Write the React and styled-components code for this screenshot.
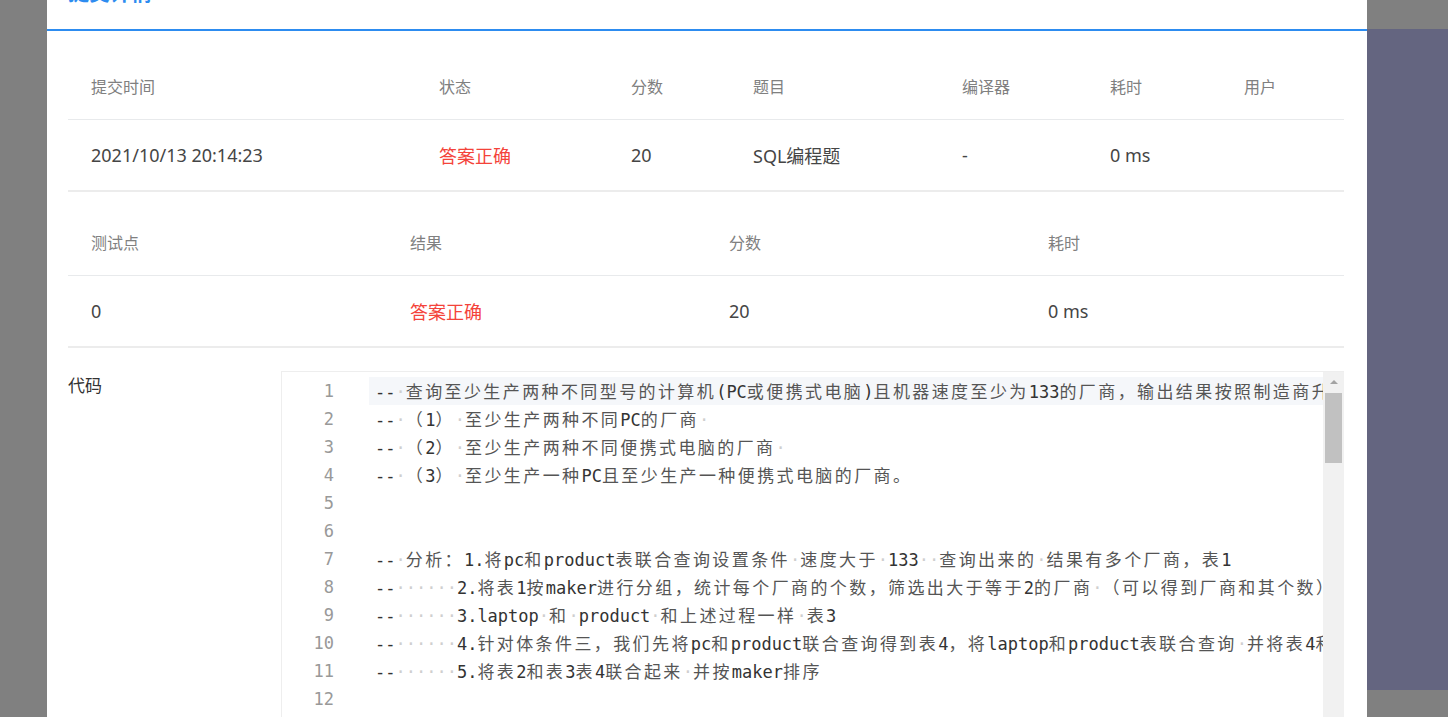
import React from 'react';
import styled, { createGlobalStyle } from 'styled-components';

const GlobalStyle = createGlobalStyle`
  html, body {
    margin: 0;
    padding: 0;
    background: #808080;
    overflow: hidden;
  }
  body {
    font-family: "Noto Sans", "Noto Sans CJK SC", sans-serif;
  }
  * { box-sizing: border-box; }
`;

const submitTable = {
  columns: '348px 192px 122px 209px 148px 134px 1fr',
  head: ['提交时间', '状态', '分数', '题目', '编译器', '耗时', '用户'],
  row: [
    { text: '2021/10/13 20:14:23' },
    { text: '答案正确', status: true },
    { text: '20' },
    { text: 'SQL编程题' },
    { text: '-' },
    { text: '0 ms' },
    { text: '' },
  ],
};

const caseTable = {
  columns: 'repeat(4, 1fr)',
  head: ['测试点', '结果', '分数', '耗时'],
  row: [
    { text: '0' },
    { text: '答案正确', status: true },
    { text: '20' },
    { text: '0 ms' },
  ],
};

const codeLines = [
  '-- 查询至少生产两种不同型号的计算机(PC或便携式电脑)且机器速度至少为133的厂商，输出结果按照制造商升序排列',
  '-- （1） 至少生产两种不同PC的厂商 ',
  '-- （2） 至少生产两种不同便携式电脑的厂商 ',
  '-- （3） 至少生产一种PC且至少生产一种便携式电脑的厂商。',
  '',
  '',
  '-- 分析：1.将pc和product表联合查询设置条件 速度大于 133  查询出来的 结果有多个厂商，表1',
  '--      2.将表1按maker进行分组，统计每个厂商的个数，筛选出大于等于2的厂商 （可以得到厂商和其个数）',
  '--      3.laptop 和 product 和上述过程一样 表3',
  '--      4.针对体条件三，我们先将pc和product联合查询得到表4，将laptop和product表联合查询 并将表4和表5联合',
  '--      5.将表2和表3表4联合起来 并按maker排序',
  '',
];

// runs of spaces, CJK text, or other ASCII text
const tokenRe = /( +)|([\u3000-\u303f\u4e00-\u9fff\uff00-\uffef]+)|([^ \u3000-\u303f\u4e00-\u9fff\uff00-\uffef]+)/g;

const Page = styled.div`
  display: flex;
  height: 100vh;
  overflow: hidden;
`;

const Shade = styled.div`
  width: 47px;
  flex-shrink: 0;
  background: #808080;
`;

const Modal = styled.div`
  width: 1320px;
  flex-shrink: 0;
  background: #fff;
  display: flex;
  flex-direction: column;
  overflow: hidden;
`;

const ModalHead = styled.div`
  flex-shrink: 0;
  height: 62px;
  margin-top: -31px;
  padding: 10px 21px 0;
  border-bottom: 2px solid #2d8cf0;
`;

const Title = styled.div`
  color: #2d8cf0;
  font: 600 21px/24px "Noto Sans CJK SC", sans-serif;
`;

const ModalBody = styled.div`
  flex-shrink: 0;
  padding: 21px 23px 0 21px;
`;

const Table = styled.div`
  margin-bottom: ${(p) => p.gap || 0}px;
`;

const Row = styled.div`
  display: grid;
  grid-template-columns: ${(p) => p.columns};
  height: ${(p) => (p.head ? 68 : 72)}px;
  border-bottom: ${(p) => (p.head ? '1px solid #e8eaec' : '2px solid #ececec')};
  align-items: center;
`;

const Cell = styled.div`
  padding-left: 23px;
  white-space: nowrap;
  color: ${(p) => (p.head ? '#808080' : p.status ? '#f4433a' : '#454545')};
  font-size: ${(p) => (p.head ? 16 : 18)}px;
  font-family: "Noto Sans", "Noto Sans CJK SC", sans-serif;
`;

const CodeSection = styled.div`
  display: grid;
  grid-template-columns: 213px minmax(0, 1fr);
  margin-top: 23px;
`;

const CodeLabel = styled.div`
  color: #333;
  font: 17px/28px "Noto Sans CJK SC", sans-serif;
`;

const Editor = styled.div`
  display: flex;
  height: 400px;
  min-width: 0;
  border-top: 1px solid #eee;
  border-left: 1px solid #eee;
  font: 17px/28px "DejaVu Sans Mono", monospace;
`;

const Gutter = styled.div`
  width: 87px;
  flex-shrink: 0;
  padding: 5px 35px 0 0;
  text-align: right;
  color: #999;
`;

const Lines = styled.div`
  flex: 1;
  min-width: 0;
  padding-top: 5px;
  overflow: hidden;
`;

const Line = styled.div`
  height: 28px;
  padding-left: 6px;
  white-space: pre;
  color: #333;
  background: ${(p) => (p.active ? '#f5f7fa' : 'transparent')};
`;

const Dot = styled.span`
  color: #cfcfcf;
`;

const Cjk = styled.span`
  font-family: "Noto Sans CJK SC", sans-serif;
  font-size: 17px;
  letter-spacing: 2.4px;
  color: #555;
  text-spacing-trim: space-all;
  font-kerning: none;
`;

const Scrollbar = styled.div`
  width: 21px;
  flex-shrink: 0;
  background: #f1f1f1;
  display: flex;
  flex-direction: column;
  align-items: center;
`;

const ScrollArrow = styled.div`
  margin-top: 8px;
  width: 0;
  height: 0;
  border-left: 4px solid transparent;
  border-right: 4px solid transparent;
  border-bottom: 4px solid #a3a3a3;
`;

const ScrollThumb = styled.div`
  margin-top: 9px;
  width: 17px;
  height: 70px;
  background: #c1c1c1;
`;

const Backdrop = styled.div`
  flex: 1;
  display: flex;
  flex-direction: column;
`;

const BackBand = styled.div`
  height: ${(p) => p.h}px;
  flex: ${(p) => (p.h ? 'none' : 1)};
  background: ${(p) => (p.dark ? '#646580' : '#808080')};
`;

const DataTable = ({ table, gap }) => (
  <Table gap={gap}>
    <Row head columns={table.columns}>
      {table.head.map((h) => (
        <Cell head key={h}>{h}</Cell>
      ))}
    </Row>
    <Row columns={table.columns}>
      {table.row.map((c, i) => (
        <Cell key={i} status={c.status}>{c.text}</Cell>
      ))}
    </Row>
  </Table>
);

const CodeLine = ({ text, active }) => {
  const parts = [];
  let m;
  let k = 0;
  tokenRe.lastIndex = 0;
  while ((m = tokenRe.exec(text)) !== null) {
    if (m[1]) parts.push(<Dot key={k++}>{'·'.repeat(m[1].length)}</Dot>);
    else if (m[2]) parts.push(<Cjk key={k++}>{m[2]}</Cjk>);
    else parts.push(<span key={k++}>{m[3]}</span>);
  }
  return <Line active={active}>{parts.length ? parts : ' '}</Line>;
};

const App = () => (
  <Page>
    <GlobalStyle />
    <Shade />
    <Modal>
      <ModalHead>
        <Title>提交详情</Title>
      </ModalHead>
      <ModalBody>
        <DataTable table={submitTable} gap={16} />
        <DataTable table={caseTable} />
        <CodeSection>
          <CodeLabel>代码</CodeLabel>
          <Editor>
            <Gutter>
              {codeLines.map((_, i) => (
                <div key={i}>{i + 1}</div>
              ))}
            </Gutter>
            <Lines>
              {codeLines.map((l, i) => (
                <CodeLine key={i} text={l} active={i === 0} />
              ))}
            </Lines>
            <Scrollbar>
              <ScrollArrow />
              <ScrollThumb />
            </Scrollbar>
          </Editor>
        </CodeSection>
      </ModalBody>
    </Modal>
    <Backdrop>
      <BackBand h={29} />
      <BackBand h={661} dark />
      <BackBand />
    </Backdrop>
  </Page>
);

export default App;
